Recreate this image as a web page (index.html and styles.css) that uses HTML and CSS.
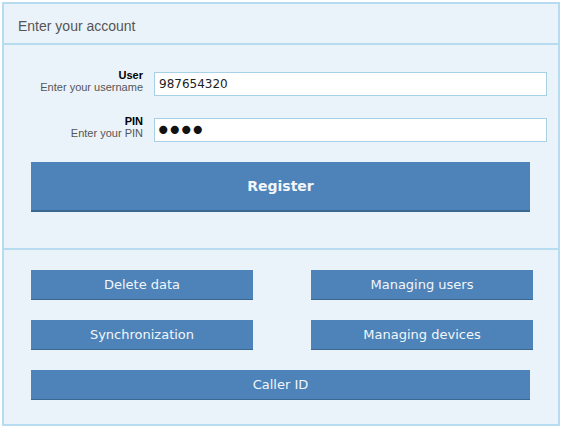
FILE: index.html
```html
<!DOCTYPE html>
<html lang="en">
<head>
    <meta charset="UTF-8">
    <meta name="viewport" content="width=device-width, initial-scale=1.0">
    <title>Enter your account</title>
    <link rel="stylesheet" href="styles.css">
</head>
<body>

    <div class="account">
        <div class="account-title">Enter your account</div>

        <form class="login">
            <div class="field">
                <label class="field-label" for="user">
                    <b>User</b>
                    <span>Enter your username</span>
                </label>
                <input type="text" id="user" value="987654320">
            </div>
            <div class="field">
                <label class="field-label" for="pin">
                    <b>PIN</b>
                    <span>Enter your PIN</span>
                </label>
                <input type="password" id="pin" value="1234">
            </div>
            <button type="button" class="btn btn-register">Register</button>
        </form>

        <div class="actions">
            <button class="btn">Delete data</button>
            <button class="btn">Managing users</button>
            <button class="btn">Synchronization</button>
            <button class="btn">Managing devices</button>
            <button class="btn btn-wide">Caller ID</button>
        </div>
    </div>

</body>
</html>
```

FILE: styles.css
```css
/* Account panel */
body {
    margin: 0;
    font-family: "Liberation Sans", Arial, sans-serif;
    background-color: #fff;
}

.account {
    margin: 2px;
    width: 554px;
    height: 420px;
    border: 2px solid #b7dcef;
    background-color: #ebf3fa;
    display: flex;
    flex-direction: column;
}

.account-title {
    height: 41px;
    padding: 5px 0 0 14px;
    box-sizing: border-box;
    display: flex;
    align-items: center;
    font-size: 14px;
    color: #555;
    border-bottom: 2px solid #b7dcef;
}

.login {
    margin: 0;
    padding: 27px 11px 36px 0;
    border-bottom: 2px solid #b7dcef;
    display: flex;
    flex-direction: column;
    gap: 22px;
}

.field {
    display: grid;
    grid-template-columns: 139px 1fr;
    column-gap: 11px;
    align-items: start;
}

.field-label {
    margin-top: -3px;
    display: flex;
    flex-direction: column;
    align-items: flex-end;
    font-size: 11px;
    line-height: 12px;
}

.field-label b {
    color: #000;
}

.field-label span {
    color: #555;
}

.field input {
    height: 24px;
    box-sizing: border-box;
    margin: 0;
    padding: 0 4px;
    border: 1px solid #a8d0e7;
    background-color: #fff;
    font-family: "DejaVu Sans", sans-serif;
    font-size: 12px;
    color: #222;
    outline: none;
}

.field input[type="password"] {
    padding: 0;
    font-size: 28px;
    letter-spacing: -5px;
    color: #111;
}

.btn {
    height: 30px;
    margin: 0;
    padding: 0;
    border: none;
    border-bottom: 1px solid #3b6791;
    background-color: #4d83b8;
    color: #f2f6fb;
    font-family: "DejaVu Sans", sans-serif;
    font-size: 13px;
    cursor: pointer;
}

.btn-register {
    width: 499px;
    height: 50px;
    margin: -2px 0 0 27px;
    border-bottom-width: 2px;
    font-size: 14px;
    font-weight: bold;
}

.actions {
    padding: 20px 0 0 27px;
    display: grid;
    grid-template-columns: 222px 222px;
    column-gap: 58px;
    row-gap: 20px;
}

.btn-wide {
    grid-column: 1 / 3;
    width: 499px;
}
```
